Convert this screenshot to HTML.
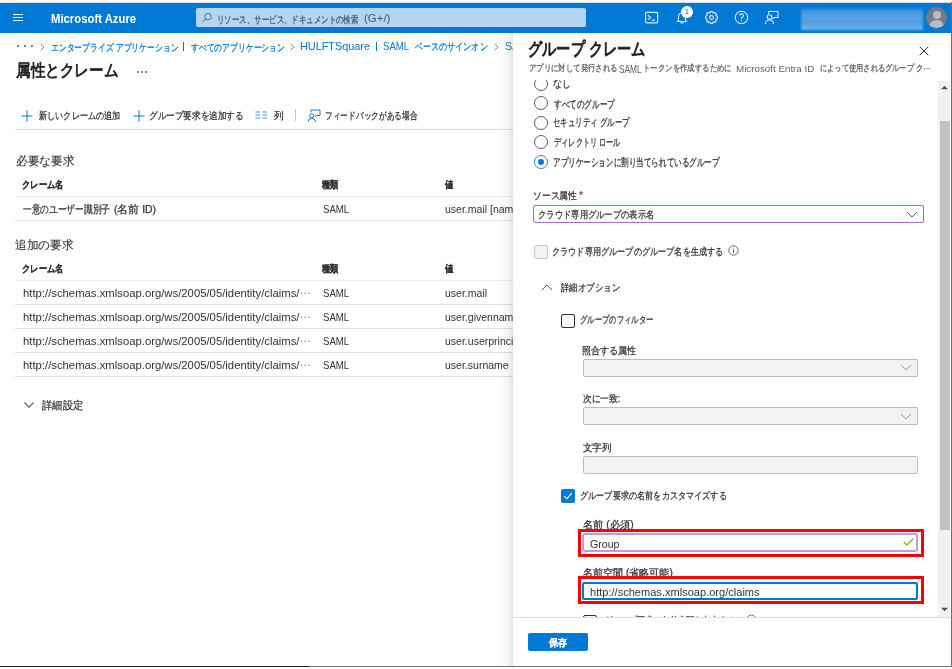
<!DOCTYPE html>
<html lang="ja"><head><meta charset="utf-8">
<style>
*{box-sizing:border-box;margin:0;padding:0}
html,body{width:952px;height:669px;overflow:hidden;background:#fff}
body{position:relative;font-family:"Liberation Sans",sans-serif;color:#323130;font-size:12px}
.t{position:absolute;white-space:nowrap;line-height:1;transform-origin:0 0;-webkit-text-stroke:0.25px currentColor}
.b{position:absolute}
.sep{position:absolute;height:1px;background:#edebe9}
.lk{color:#0078d4}
.lat{-webkit-text-stroke:0}
.hb{-webkit-text-stroke:0.2px currentColor}
.hl{-webkit-text-stroke:0.1px currentColor}
.radio{position:absolute;width:14px;height:14px;border:1px solid #605e5c;border-radius:50%}
.dd{position:absolute;border:1px solid #bebcba;background:#f3f2f1;border-radius:2px}
</style></head><body>
<!-- header -->
<div class="b" style="left:0;top:2px;width:951px;height:1px;background:#d6dce2"></div>
<div class="b" style="left:0;top:3px;width:951px;height:30px;background:#0078d4"></div>
<div class="b" style="left:13px;top:14px;width:10px;height:1.3px;background:#e8f1fa"></div>
<div class="b" style="left:13px;top:17px;width:10px;height:1.3px;background:#e8f1fa"></div>
<div class="b" style="left:13px;top:20px;width:10px;height:1.3px;background:#e8f1fa"></div>
<div id="az" class="lat t" style="left:50.8px;top:13.0px;color:#fff;font-weight:bold;font-size:12px;transform:scaleX(0.943)">Microsoft Azure</div>
<div class="b" style="left:196px;top:8px;width:390px;height:19px;background:#b4d5f1;border-radius:2px"></div>
<svg class="b" style="left:202px;top:11px" width="12" height="12" viewBox="0 0 12 12"><circle cx="6" cy="5.6" r="3.2" fill="none" stroke="#456480" stroke-width="0.9"/><line x1="3.7" y1="7.9" x2="0.6" y2="11" stroke="#456480" stroke-width="1"/></svg>
<div id="srch" class="t" style="left:217.3px;top:15.2px;color:#3d5a78;font-size:10px;transform:scaleX(0.744)">リソース、サービス、ドキュメントの検索</div>
<div id="srch2" class="lat t" style="left:364.0px;top:13.2px;color:#3d5a78;font-size:10.5px;transform:scaleX(1.092)">(G+/)</div>
<!-- header icons -->
<svg class="b" style="left:644px;top:11px" width="15" height="13" viewBox="0 0 15 13"><rect x="1.6" y="1.4" width="12" height="10.4" rx="1" fill="none" stroke="#dbe9f7" stroke-width="1.2"/><polyline points="3.8,4.2 6.6,6.5 3.8,8.8" fill="none" stroke="#dbe9f7" stroke-width="1.1"/><line x1="7.8" y1="9.2" x2="11" y2="9.2" stroke="#dbe9f7" stroke-width="1.1"/></svg>
<svg class="b" style="left:675px;top:10px" width="14" height="14" viewBox="0 0 14 14"><path d="M2.5 11.5 L3.5 10 L3.5 6.5 Q3.5 3 7 3 Q10.5 3 10.5 6.5 L10.5 10 L11.5 11.5 Z" fill="none" stroke="#dbe9f7" stroke-width="1.1"/><path d="M5.5 12.3 Q7 13.8 8.5 12.3" fill="none" stroke="#dbe9f7" stroke-width="1.1"/></svg>
<div class="b" style="left:681px;top:6px;width:12px;height:12px;border-radius:50%;background:#fff"></div>
<div class="lat t" style="left:684.5px;top:8px;font-size:8px;color:#0078d4">1</div>
<svg class="b" style="left:704px;top:10px" width="15" height="15" viewBox="0 0 15 15"><g fill="none" stroke="#dbe9f7" stroke-width="1.1"><circle cx="7.5" cy="7.5" r="1.9"/><path stroke-linejoin="round" d="M13.38 6.31 L13.38 8.69 L11.90 9.16 L11.78 9.44 L12.50 10.82 L10.82 12.50 L9.44 11.78 L9.16 11.90 L8.69 13.38 L6.31 13.38 L5.84 11.90 L5.56 11.78 L4.18 12.50 L2.50 10.82 L3.22 9.44 L3.10 9.16 L1.62 8.69 L1.62 6.31 L3.10 5.84 L3.22 5.56 L2.50 4.18 L4.18 2.50 L5.56 3.22 L5.84 3.10 L6.31 1.62 L8.69 1.62 L9.16 3.10 L9.44 3.22 L10.82 2.50 L12.50 4.18 L11.78 5.56 L11.90 5.84Z"/></g></svg>
<svg class="b" style="left:734px;top:10px" width="15" height="15" viewBox="0 0 15 15"><circle cx="7.5" cy="7.5" r="6.2" fill="none" stroke="#dbe9f7" stroke-width="1.1"/><path d="M5.6 5.8 Q5.6 3.9 7.5 3.9 Q9.4 3.9 9.4 5.6 Q9.4 6.8 7.5 7.6 L7.5 9" fill="none" stroke="#dbe9f7" stroke-width="1.1"/><circle cx="7.5" cy="10.9" r=".7" fill="#dbe9f7"/></svg>
<svg class="b" style="left:764px;top:10px" width="16" height="15" viewBox="0 0 16 15"><g fill="none" stroke="#dbe9f7" stroke-width="1.1"><path d="M4.5 4 V1.5 H14 V7.5 H10 L8.5 9"/><circle cx="5.5" cy="7" r="2.3"/><path d="M1.5 14 Q1.5 10 5.5 10 Q9.5 10 9.5 14"/></g></svg>
<div class="b" style="left:801px;top:9px;width:122px;height:21px;background:linear-gradient(to bottom,#3b90dc 0%,#58a5e6 45%,#4d9de2 60%,#6fb4ec 100%);filter:blur(1px)"></div>
<div class="b" style="left:926px;top:7px;width:21px;height:21px;border-radius:50%;background:#727c88;overflow:hidden">
  <div class="b" style="left:6.5px;top:3.5px;width:8px;height:8px;border-radius:50%;background:#b9bdc3"></div>
  <div class="b" style="left:3px;top:12.5px;width:15px;height:10px;border-radius:7px 7px 3px 3px;background:#b9bdc3"></div>
</div>
<div class="b" style="left:951px;top:2px;width:1px;height:665px;background:#6a6e72"></div>
<div class="b" style="left:0;top:666px;width:309px;height:1px;background:#1e1e1e"></div>
<div class="b" style="left:309px;top:666px;width:643px;height:1px;background:#727272"></div>

<!-- breadcrumb -->
<div class="b" style="left:17px;top:45px;width:2px;height:2px;background:#1c5fa8;border-radius:1px"></div>
<div class="b" style="left:24px;top:45px;width:2px;height:2px;background:#1c5fa8;border-radius:1px"></div>
<div class="b" style="left:31px;top:45px;width:2px;height:2px;background:#1c5fa8;border-radius:1px"></div>
<svg class="b" style="left:39px;top:43px" width="7" height="8" viewBox="0 0 7 8"><polyline points="1.5,0.8 5,4 1.5,7.2" fill="none" stroke="#8a8886" stroke-width="1"/></svg>
<div id="bc1" class="t lk" style="left:51.2px;top:42.5px;font-size:10px;transform:scaleX(0.783)">エンタープライズ アプリケーション</div>
<div class="b" style="left:183px;top:42px;width:1px;height:9px;background:#0078d4"></div>
<div id="bc2" class="t lk" style="left:190.5px;top:42.5px;font-size:10px;transform:scaleX(0.782)">すべてのアプリケーション</div>
<svg class="b" style="left:289px;top:43px" width="7" height="8" viewBox="0 0 7 8"><polyline points="1.5,0.8 5,4 1.5,7.2" fill="none" stroke="#8a8886" stroke-width="1"/></svg>
<div id="bc3" class="lat t lk" style="left:300.2px;top:41.2px;font-size:10.5px;transform:scaleX(1.034)">HULFTSquare</div>
<div class="b" style="left:376px;top:42px;width:1px;height:9px;background:#0078d4"></div>
<div id="bc4" class="lat t lk" style="left:383.2px;top:41.2px;font-size:10.5px;transform:scaleX(0.915)">SAML</div>
<div id="bc5" class="t lk" style="left:415.0px;top:41.6px;font-size:10px;transform:scaleX(0.807)">ベースのサインオン</div>
<svg class="b" style="left:493px;top:43px" width="7" height="8" viewBox="0 0 7 8"><polyline points="1.5,0.8 5,4 1.5,7.2" fill="none" stroke="#8a8886" stroke-width="1"/></svg>
<div class="lat t lk" style="left:504.5px;top:41.2px;font-size:10.5px;transform:scaleX(1.03)">SA</div>

<div id="ttl" class="t" style="left:15.5px;top:62.2px;font-size:17px;color:#201f1e;-webkit-text-stroke:0.8px #201f1e;transform:scaleX(0.860)">属性とクレーム</div>
<div class="b" style="left:137px;top:71px;width:1.5px;height:1.5px;background:#8a8886"></div>
<div class="b" style="left:141px;top:71px;width:1.5px;height:1.5px;background:#8a8886"></div>
<div class="b" style="left:145px;top:71px;width:1.5px;height:1.5px;background:#8a8886"></div>

<!-- toolbar -->
<svg class="b" style="left:21px;top:110px" width="12" height="12" viewBox="0 0 12 12"><path d="M6 0.5V11.5M0.5 6H11.5" stroke="#0078d4" stroke-width="1"/></svg>
<div id="tb1" class="t" style="left:39.0px;top:111.2px;font-size:10px;transform:scaleX(0.816)">新しいクレームの追加</div>
<svg class="b" style="left:133px;top:110px" width="12" height="12" viewBox="0 0 12 12"><path d="M6 0.5V11.5M0.5 6H11.5" stroke="#0078d4" stroke-width="1"/></svg>
<div id="tb2" class="t" style="left:149.1px;top:111.2px;font-size:10px;transform:scaleX(0.860)">グループ要求を追加する</div>
<svg class="b" style="left:255px;top:111.2px" width="13" height="8" viewBox="0 0 13 8"><path d="M0.5 1H5M0.5 4H5M0.5 7H5M7.5 1H12M7.5 4H12M7.5 7H12" stroke="#2b88d8" stroke-width="0.9"/></svg>
<div id="tb3" class="t" style="left:273.6px;top:111.2px;font-size:10px;transform:scaleX(0.964)">列</div>
<div class="b" style="left:295px;top:109px;width:1px;height:12px;background:#c8c6c4"></div>
<svg class="b" style="left:307px;top:108.8px" width="14" height="14" viewBox="0 0 14 14"><g fill="none" stroke="#0078d4" stroke-width="0.95"><path d="M4 3.5V1H13V6.5H9.5L8 8"/><circle cx="4.8" cy="6.8" r="2.1"/><path d="M1 13Q1 9.5 4.8 9.5Q8.6 9.5 8.6 13"/></g></svg>
<div id="tb4" class="t" style="left:325.2px;top:111.0px;font-size:10px;transform:scaleX(0.770)">フィードバックがある場合</div>
<div class="sep" style="left:15px;top:129px;width:498px;background:#e1dfdd"></div>

<!-- required claims -->
<div id="h1" class="hl t" style="left:15.6px;top:156.0px;font-size:11.5px;transform:scaleX(0.973)">必要な要求</div>
<div id="c1" class="hb t" style="left:21.6px;top:179.6px;font-size:9.5px;font-weight:bold;transform:scaleX(0.829)">クレーム名</div>
<div id="c2" class="hb t" style="left:322px;top:179.6px;font-size:9.5px;font-weight:bold;transform:scaleX(0.829)">種類</div>
<div id="c3" class="hb t" style="left:445px;top:179.6px;font-size:9.5px;font-weight:bold;transform:scaleX(0.829)">値</div>
<div class="sep" style="left:15px;top:196px;width:498px"></div>
<div id="r1" class="t" style="left:23.2px;top:204.0px;font-size:10.5px;transform:scaleX(0.790)">一意のユーザー識別子</div>
<div id="r1b" class="t" style="left:114.2px;top:204.0px;font-size:10.5px;transform:scaleX(0.990)">(名前 ID)</div>
<div id="s1" class="lat t" style="left:322.8px;top:204.0px;font-size:11.5px;transform:scaleX(0.832)">SAML</div>
<div id="v1" class="lat t" style="left:445.2px;top:204.4px;font-size:11.5px;transform:scaleX(0.914)">user.mail [nameid-format:emailAddress]</div>
<div class="sep" style="left:15px;top:220px;width:498px;background:#e1dfdd"></div>

<!-- additional claims -->
<div id="h2" class="hl t" style="left:15.3px;top:239.9px;font-size:11.5px;transform:scaleX(0.973)">追加の要求</div>
<div id="c4" class="hb t" style="left:21.6px;top:264.0px;font-size:9.5px;font-weight:bold;transform:scaleX(0.829)">クレーム名</div>
<div id="c5" class="hb t" style="left:322px;top:264.0px;font-size:9.5px;font-weight:bold;transform:scaleX(0.829)">種類</div>
<div id="c6" class="hb t" style="left:445px;top:264.0px;font-size:9.5px;font-weight:bold;transform:scaleX(0.829)">値</div>
<div class="sep" style="left:15px;top:280px;width:498px"></div>
<div id="u1" class="lat t" style="left:23.0px;top:288.4px;font-size:11.5px;transform:scaleX(0.983)">http://schemas.xmlsoap.org/ws/2005/05/identity/claims/<span style="position:relative;top:-3px;color:#79777a">…</span></div>
<div class="lat t" style="left:322.8px;top:287.6px;font-size:11.5px;transform:scaleX(0.832)">SAML</div>
<div class="lat t" style="left:445.2px;top:288.4px;font-size:11.5px;transform:scaleX(0.914)">user.mail</div>
<div class="sep" style="left:15px;top:304px;width:498px;background:#e1dfdd"></div>
<div class="lat t" style="left:23.0px;top:312.4px;font-size:11.5px;transform:scaleX(0.983)">http://schemas.xmlsoap.org/ws/2005/05/identity/claims/<span style="position:relative;top:-3px;color:#79777a">…</span></div>
<div class="lat t" style="left:322.8px;top:311.6px;font-size:11.5px;transform:scaleX(0.832)">SAML</div>
<div class="lat t" style="left:445.2px;top:312.4px;font-size:11.5px;transform:scaleX(0.914)">user.givenname</div>
<div class="sep" style="left:15px;top:328px;width:498px;background:#e1dfdd"></div>
<div class="lat t" style="left:23.0px;top:336.4px;font-size:11.5px;transform:scaleX(0.983)">http://schemas.xmlsoap.org/ws/2005/05/identity/claims/<span style="position:relative;top:-3px;color:#79777a">…</span></div>
<div class="lat t" style="left:322.8px;top:335.6px;font-size:11.5px;transform:scaleX(0.832)">SAML</div>
<div class="lat t" style="left:445.2px;top:336.4px;font-size:11.5px;transform:scaleX(0.914)">user.userprincipalname</div>
<div class="sep" style="left:15px;top:352px;width:498px;background:#e1dfdd"></div>
<div class="lat t" style="left:23.0px;top:360.4px;font-size:11.5px;transform:scaleX(0.983)">http://schemas.xmlsoap.org/ws/2005/05/identity/claims/<span style="position:relative;top:-3px;color:#79777a">…</span></div>
<div class="lat t" style="left:322.8px;top:359.6px;font-size:11.5px;transform:scaleX(0.832)">SAML</div>
<div id="v5" class="lat t" style="left:445.2px;top:360.4px;font-size:11.5px;transform:scaleX(0.914)">user.surname</div>
<div class="sep" style="left:15px;top:376px;width:498px;background:#e1dfdd"></div>
<svg class="b" style="left:23.5px;top:402px" width="10" height="6" viewBox="0 0 10 6"><polyline points="0.5,0.5 5,5.2 9.5,0.5" fill="none" stroke="#605e5c" stroke-width="1.1"/></svg>
<div id="adv" class="t" style="left:41.8px;top:400.0px;font-size:10.5px;transform:scaleX(0.934)">詳細設定</div>

<!-- panel shadow -->
<div class="b" style="left:499px;top:33px;width:14px;height:633px;background:linear-gradient(to right,rgba(0,0,0,0),rgba(0,0,0,.035) 60%,rgba(0,0,0,.10))"></div>
<div class="b" style="left:513px;top:33px;width:438px;height:633px;background:#fff"></div>
<div id="pt" class="t" style="left:527.6px;top:41.4px;font-size:17.5px;color:#201f1e;-webkit-text-stroke:1px #201f1e;transform:scaleX(0.790)">グループ クレーム</div>
<div id="sa" class="t" style="left:528.8px;top:64.4px;font-size:9px;color:#605e5c;transform:scaleX(0.818)">アプリに対して発行される</div>
<div id="sb" class="lat t" style="left:618.8px;top:64.6px;font-size:10px;color:#605e5c;transform:scaleX(0.828)">SAML</div>
<div id="sc" class="t" style="left:642.9px;top:64.4px;font-size:9px;color:#605e5c;transform:scaleX(0.823)">トークンを作成するために</div>
<div id="sd" class="lat t" style="left:736.4px;top:63.8px;font-size:9.5px;color:#605e5c;transform:scaleX(1.030)">Microsoft Entra ID</div>
<div id="se" class="t" style="left:819.6px;top:64.4px;font-size:9px;color:#605e5c;transform:scaleX(0.803)">によって使用されるグループ ク<span style="position:relative;top:-2px">…</span></div>
<svg class="b" style="left:919px;top:46px" width="10" height="10" viewBox="0 0 10 10"><path d="M0.7 0.7L9.3 9.3M9.3 0.7L0.7 9.3" stroke="#323130" stroke-width="1"/></svg>

<!-- scroll content (clipped) -->
<div class="b" style="left:0;top:0;width:952px;height:669px;clip-path:inset(80px 0 52px 0)">
  <div class="radio" style="left:534px;top:77px"></div>
  <div id="o1" class="t" style="left:553.2px;top:77.6px;font-size:10.5px;transform:scaleX(0.804)">なし</div>
  <div class="radio" style="left:534px;top:96px"></div>
  <div id="o2" class="t" style="left:553.6px;top:99.2px;font-size:10.5px;transform:scaleX(0.692)">すべてのグループ</div>
  <div class="radio" style="left:534px;top:116px"></div>
  <div id="o3" class="t" style="left:552.8px;top:117.4px;font-size:10.5px;transform:scaleX(0.679)">セキュリティ グループ</div>
  <div class="radio" style="left:534px;top:135px"></div>
  <div id="o4" class="t" style="left:553.5px;top:136.5px;font-size:10.5px;transform:scaleX(0.652)">ディレクトリ ロール</div>
  <div class="radio" style="left:534px;top:155px;border-color:#2b88d8"></div>
  <div class="b" style="left:538px;top:158.7px;width:6px;height:6px;border-radius:50%;background:#0078d4"></div>
  <div id="o5" class="t" style="left:552.8px;top:156.7px;font-size:10.5px;transform:scaleX(0.688)">アプリケーションに割り当てられているグループ</div>

  <div id="f1" class="t" style="left:532.5px;top:191.4px;font-size:10px;transform:scaleX(0.877)">ソース属性 <span style="color:#a4262c">*</span></div>
  <div class="b" style="left:533px;top:205px;width:391px;height:18px;border:1px solid #a56ccf;border-radius:2px"></div>
  <div id="f2" class="t" style="left:538.4px;top:209.8px;font-size:10px;transform:scaleX(0.831)">クラウド専用グループの表示名</div>
  <svg class="b" style="left:906px;top:211px" width="12" height="7" viewBox="0 0 12 7"><polyline points="1,1 6,6 11,1" fill="none" stroke="#605e5c" stroke-width="1"/></svg>

  <div class="b" style="left:534px;top:245px;width:14px;height:14px;border:1px solid #c8c6c4;background:#f3f2f1;border-radius:2px"></div>
  <div id="f3" class="t" style="left:551.6px;top:247.0px;font-size:10px;transform:scaleX(0.816)">クラウド専用グループのグループ名を生成する</div>
  <svg class="b" style="left:728px;top:245px" width="11" height="11" viewBox="0 0 11 11"><circle cx="5.5" cy="5.5" r="4.7" fill="none" stroke="#605e5c" stroke-width=".9"/><path d="M5.5 4.5V8.2" stroke="#605e5c" stroke-width=".9"/><circle cx="5.5" cy="3" r=".55" fill="#605e5c"/></svg>

  <svg class="b" style="left:541px;top:284px" width="12" height="7" viewBox="0 0 12 7"><polyline points="1,6 6,1 11,6" fill="none" stroke="#605e5c" stroke-width="1"/></svg>
  <div id="f4" class="t" style="left:560.8px;top:283.0px;font-size:10px;transform:scaleX(0.843)">詳細オプション</div>

  <div class="b" style="left:561px;top:314px;width:14px;height:14px;border:1px solid #323130;border-radius:2px"></div>
  <div id="f5" class="t" style="left:579.5px;top:315.2px;font-size:10px;transform:scaleX(0.735)">グループのフィルター</div>
  <div id="f6" class="t" style="left:582.1px;top:345.6px;font-size:10px;transform:scaleX(0.908)">照合する属性</div>
  <div class="dd" style="left:583px;top:359px;width:335px;height:18px"></div>
  <svg class="b" style="left:900px;top:364px" width="12" height="7" viewBox="0 0 12 7"><polyline points="1,1 6,6 11,1" fill="none" stroke="#a19f9d" stroke-width="1"/></svg>
  <div id="f7" class="t" style="left:583.2px;top:394.0px;font-size:10px;transform:scaleX(0.871)">次に一致:</div>
  <div class="dd" style="left:583px;top:407px;width:335px;height:18px"></div>
  <svg class="b" style="left:900px;top:413px" width="12" height="7" viewBox="0 0 12 7"><polyline points="1,1 6,6 11,1" fill="none" stroke="#a19f9d" stroke-width="1"/></svg>
  <div id="f8" class="t" style="left:583.2px;top:443.0px;font-size:10px;transform:scaleX(0.946)">文字列</div>
  <div class="dd" style="left:583px;top:456px;width:335px;height:18px"></div>

  <div class="b" style="left:561px;top:489px;width:14px;height:14px;background:#0078d4;border-radius:2px"></div>
  <svg class="b" style="left:561px;top:489px" width="14" height="14" viewBox="0 0 14 14"><polyline points="3.2,7.2 5.8,9.8 10.8,4.2" fill="none" stroke="#fff" stroke-width="1.1"/></svg>
  <div id="f9" class="t" style="left:579.8px;top:491.0px;font-size:10px;transform:scaleX(0.815)">グループ要求の名前をカスタマイズする</div>
  <div id="f10" class="t" style="left:583.0px;top:520.0px;font-size:10px;transform:scaleX(1.025)">名前 (必須)</div>
  <div class="b" style="left:582px;top:533px;width:336px;height:19px;border:2px solid #c39ade;border-radius:3px"></div>
  <div id="f11" class="lat t" style="left:589.6px;top:538.8px;font-size:10.5px;transform:scaleX(1.008)">Group</div>
  <svg class="b" style="left:903px;top:538px" width="11" height="8" viewBox="0 0 11 8"><polyline points="0.8,4 3.8,7 10.2,0.8" fill="none" stroke="#6bb700" stroke-width="1.2"/></svg>
  <div id="f12" class="t" style="left:583.0px;top:568.0px;font-size:10px;transform:scaleX(1.005)">名前空間 (省略可能)</div>
  <div class="b" style="left:582px;top:582px;width:336px;height:18px;border:2px solid #0078d4;border-radius:2px"></div>
  <div id="f13" class="lat t" style="left:589.6px;top:586.8px;font-size:10.5px;transform:scaleX(1.053)">http://schemas.xmlsoap.org/claims</div>
  <div class="b" style="left:583px;top:615px;width:14px;height:14px;border:1px solid #323130;border-radius:2px"></div>
  <div class="t" style="left:604px;top:615.5px;font-size:10px;transform:scaleX(0.82)">グループ要求の名前空間を出力する</div>
  <svg class="b" style="left:746px;top:614px" width="11" height="11" viewBox="0 0 11 11"><circle cx="5.5" cy="5.5" r="4.5" fill="none" stroke="#605e5c" stroke-width=".9"/></svg>

  <!-- red highlight boxes -->
  <div class="b" style="left:578px;top:529px;width:346px;height:28px;border:3px solid #ff0000;border-width:3.5px 3px"></div>
  <div class="b" style="left:578px;top:576px;width:346px;height:28px;border:3px solid #ff0000;border-width:3.5px 3px"></div>
</div>

<!-- scrollbar -->
<div class="b" style="left:938px;top:81px;width:12px;height:536px;background:#f1f1f1"></div>
<div class="b" style="left:940px;top:121px;width:10px;height:409px;background:#c1c1c1"></div>
<svg class="b" style="left:940px;top:85px" width="9" height="5" viewBox="0 0 9 5"><polygon points="1,4.3 4.5,0.8 8,4.3" fill="#505050"/></svg>
<svg class="b" style="left:940px;top:607px" width="9" height="5" viewBox="0 0 9 5"><polygon points="1,0.7 4.5,4.2 8,0.7" fill="#505050"/></svg>

<!-- footer -->
<div class="b" style="left:513px;top:617px;width:438px;height:1px;background:#e1dfdd"></div>
<div class="b" style="left:528px;top:633px;width:60px;height:18px;background:#0078d4;border-radius:2px"></div>
<div id="save" class="t" style="left:549.3px;top:637.5px;font-size:9.5px;font-weight:bold;color:#fff;transform:scaleX(0.914)">保存</div>
</body></html>
